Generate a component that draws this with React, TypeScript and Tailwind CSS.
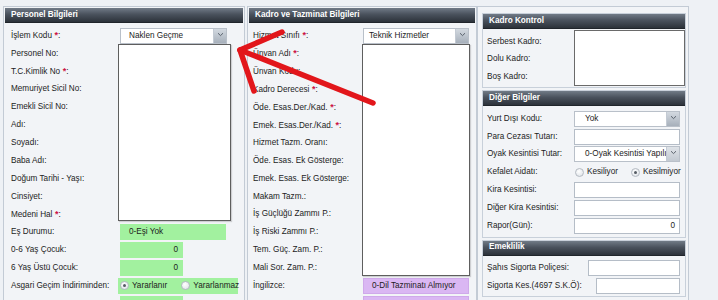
import type { ReactNode } from "react";

function Header({ title }: { title: string }) {
  return (
    <div className="h-[15px] flex items-center pl-[6px] text-white font-bold text-[8.2px] leading-none bg-[linear-gradient(to_bottom,#717b87,#4a525d_45%,#2c323a)] border-b border-[#20252b]">
      {title}
    </div>
  );
}

function Label({ text, req }: { text: string; req?: boolean }) {
  if (!text) return null;
  return (
    <span className="whitespace-nowrap">
      {text}
      {req && <span className="text-[#cc1144] font-bold text-[9px]"> *</span>}:
    </span>
  );
}

function Row({
  label,
  req,
  w,
  h = "h-[17.86px]",
  children,
}: {
  label: string;
  req?: boolean;
  w: string;
  h?: string;
  children?: ReactNode;
}) {
  return (
    <div className={`flex items-center ${h}`}>
      <div className={`${w} shrink-0`}>
        <Label text={label} req={req} />
      </div>
      {children}
    </div>
  );
}

function Arrow({ dim }: { dim?: boolean }) {
  return (
    <div
      className={`w-[13px] h-full shrink-0 border-l border-[#c3cad3] flex justify-center pt-[3px] ${
        dim
          ? "bg-[linear-gradient(to_bottom,#dfe3e8,#c2c9d1)]"
          : "bg-[linear-gradient(to_bottom,#d3d9e0,#a7b0bb)]"
      }`}
    >
      <svg width="7" height="5" viewBox="0 0 7 5">
        <path d="M1 1.2 L3.5 3.6 L6 1.2" fill="none" stroke="#5b636d" strokeWidth="1" />
      </svg>
    </div>
  );
}

function Select({ w, text, pl, dim }: { w: string; text: string; pl: string; dim?: boolean }) {
  return (
    <div className={`h-[16px] bg-white border border-[#b9c0c9] flex items-stretch ${w}`}>
      <div className={`flex-1 flex items-center overflow-hidden whitespace-nowrap ${pl}`}>{text}</div>
      <Arrow dim={dim} />
    </div>
  );
}

function Box({ w, value, cls = "bg-white border-[#b5bdc7]", right }: { w: string; value?: string; cls?: string; right?: boolean }) {
  return (
    <div
      className={`h-[16px] border flex items-center whitespace-nowrap ${cls} ${w} ${
        right ? "justify-end pr-[4px]" : "pl-[8px]"
      }`}
    >
      {value}
    </div>
  );
}

function Radio({ on }: { on?: boolean }) {
  return (
    <span className="w-[9px] h-[9px] rounded-full border border-[#b4bac2] bg-[radial-gradient(circle_at_40%_35%,#ffffff,#dadfe5)] flex items-center justify-center shrink-0">
      {on && <span className="w-[3px] h-[3px] rounded-full bg-[#555c64]" />}
    </span>
  );
}

const personel: [string, boolean?][] = [
  ["Personel No"],
  ["T.C.Kimlik No", true],
  ["Memuriyet Sicil No"],
  ["Emekli Sicil No"],
  ["Adı"],
  ["Soyadı"],
  ["Baba Adı"],
  ["Doğum Tarihi - Yaşı"],
  ["Cinsiyet"],
  ["Medeni Hal", true],
];

const kadro: [string, boolean?][] = [
  ["Ünvan Adı", true],
  ["Ünvan Kodu"],
  ["Kadro Derecesi", true],
  ["Öde. Esas.Der./Kad.", true],
  ["Emek. Esas.Der./Kad.", true],
  ["Hizmet Tazm. Oranı"],
  ["Öde. Esas. Ek Gösterge"],
  ["Emek. Esas. Ek Gösterge"],
  ["Makam Tazm."],
  ["İş Güçlüğü Zammı P."],
  ["İş Riski Zammı P."],
  ["Tem. Güç. Zam. P."],
  ["Mali Sor. Zam. P."],
];

const green = "bg-[#a2f19f] border-[#a2f19f]";
const purple = "bg-[#dab7f3] border-[#cfa9ea]";

export default function App() {
  const c1 = "w-[115px] pl-[6px]";
  const c2 = "w-[114px] pl-[4px]";
  const c3 = "w-[91px] pl-[4px]";
  return (
    <div className="relative w-[718px] h-[300px] overflow-hidden bg-[#eef1f5] text-[#1c1c1c] text-[8.2px] leading-none font-['Liberation_Sans',Arial,sans-serif]">
      <div className="flex items-start pt-[6px] pl-[3px]">
        {/* Personel Bilgileri */}
        <div className="w-[242px] h-[310px] border border-[#c3cbd5] p-[1px] bg-[#f2f4f7]">
          <Header title="Personel Bilgileri" />
          <div className="pt-[4px]">
            <Row label="İşlem Kodu" req w={c1}>
              <div className="relative">
                <Select w="w-[107px]" text="Naklen Geçme" pl="pl-[8px]" />
                <div className="absolute left-[-2px] top-[16px] w-[113px] h-[177px] bg-white border border-[#5e5e5e] shadow-[1px_1px_1px_rgba(0,0,0,0.15)]" />
              </div>
            </Row>
            {personel.map(([l, r]) => (
              <Row key={l} label={l} req={r} w={c1} />
            ))}
            <Row label="Eş Durumu" w={c1}>
              <Box w="w-[106px]" value="0-Eşi Yok" cls={green} />
            </Row>
            <Row label="0-6 Yaş Çocuk" w={c1}>
              <Box w="w-[63px]" value="0" cls={green} right />
            </Row>
            <Row label="6 Yaş Üstü Çocuk" w={c1}>
              <Box w="w-[63px]" value="0" cls={green} right />
            </Row>
            <Row label="Asgari Geçim İndiriminden" w={c1}>
              <div className="ml-[-2px] w-[120px] h-[16px] bg-[#a2f19f] flex items-center pl-[2px]">
                <Radio on />
                <span className="ml-[3px]">Yararlanır</span>
                <span className="ml-[14px]">
                  <Radio />
                </span>
                <span className="ml-[3px]">Yararlanmaz</span>
              </div>
            </Row>
            <Row label="" w={c1}>
              <Box w="w-[63px]" cls={green} right />
            </Row>
          </div>
        </div>

        {/* Kadro ve Tazminat Bilgileri */}
        <div className="ml-[2px] w-[230px] h-[310px] border border-[#c3cbd5] p-[1px] bg-[#f2f4f7]">
          <Header title="Kadro ve Tazminat Bilgileri" />
          <div className="pt-[4px]">
            <Row label="Hizmet Sınıfı" req w={c2}>
              <div className="relative">
                <Select w="w-[106px]" text="Teknik Hizmetler" pl="pl-[5px]" />
                <div className="absolute left-[-1px] top-[16px] w-[108px] h-[232px] bg-white border border-[#5e5e5e] shadow-[1px_1px_1px_rgba(0,0,0,0.15)]" />
              </div>
            </Row>
            {kadro.map(([l, r]) => (
              <Row key={l} label={l} req={r} w={c2} />
            ))}
            <Row label="İngilizce" w={c2}>
              <Box w="w-[106px]" value="0-Dil Tazminatı Almıyor" cls={purple} />
            </Row>
            <Row label="" w={c2}>
              <Box w="w-[106px]" cls={purple} />
            </Row>
          </div>
        </div>

        {/* Kadro Kontrol / Diğer / Emeklilik */}
        <div className="w-[212px] h-[310px] border border-[#c3cbd5] pl-[4px] pr-[2px] pt-[6px] bg-[#f2f4f7]">
          <div className="border border-[#c8d0da]">
            <Header title="Kadro Kontrol" />
            <div className="flex py-[1px]">
              <div className={`${c3} pt-[3px]`}>
                <div className="h-[17.5px] flex items-center">Serbest Kadro:</div>
                <div className="h-[17.5px] flex items-center">Dolu Kadro:</div>
                <div className="h-[17.5px] flex items-center">Boş Kadro:</div>
              </div>
              <div className="w-[111px] h-[56px] bg-white border border-[#6a6a6a]" />
            </div>
          </div>

          <div className="mt-[2px] border border-[#c8d0da]">
            <Header title="Diğer Bilgiler" />
            <div className="pt-[4px] pb-[2px]">
              <Row label="Yurt Dışı Kodu" w={c3} h="h-[17.8px]">
                <Select w="w-[106px]" text="Yok" pl="pl-[10px]" />
              </Row>
              <Row label="Para Cezası Tutarı" w={c3} h="h-[17.8px]">
                <Box w="w-[106px]" />
              </Row>
              <Row label="Oyak Kesintisi Tutar" w={c3} h="h-[17.8px]">
                <Select w="w-[106px]" text="0-Oyak Kesintisi Yapılır" pl="pl-[10px]" dim />
              </Row>
              <Row label="Kefalet Aidatı" w={c3} h="h-[17.8px]">
                <div className="flex items-center pl-[1px]">
                  <Radio />
                  <span className="ml-[3px]">Kesiliyor</span>
                  <span className="ml-[13px]">
                    <Radio on />
                  </span>
                  <span className="ml-[3px]">Kesilmiyor</span>
                </div>
              </Row>
              <Row label="Kira Kesintisi" w={c3} h="h-[17.8px]">
                <Box w="w-[106px]" />
              </Row>
              <Row label="Diğer Kira Kesintisi" w={c3} h="h-[17.8px]">
                <Box w="w-[106px]" />
              </Row>
              <Row label="Rapor(Gün)" w={c3} h="h-[17.8px]">
                <Box w="w-[106px]" value="0" right />
              </Row>
            </div>
          </div>

          <div className="mt-[2px] border border-[#c8d0da]">
            <Header title="Emeklilik" />
            <div className="pt-[4px] pb-[1px]">
              <Row label="Şahıs Sigorta Poliçesi" w="w-[105px] pl-[4px]" h="h-[17.8px]">
                <Box w="w-[92px]" />
              </Row>
              <Row label="Sigorta Kes.(4697 S.K.Ö)" w="w-[113px] pl-[4px]" h="h-[17.8px]">
                <Box w="w-[84px]" />
              </Row>
            </div>
          </div>
        </div>
      </div>

      {/* red annotation arrow */}
      <svg className="absolute inset-0 pointer-events-none" width="718" height="300" viewBox="0 0 718 300">
        <g stroke="#e2161b" strokeWidth="5.5" strokeLinecap="round" fill="none">
          <line x1="240" y1="50" x2="373" y2="103" />
          <line x1="240" y1="50" x2="282" y2="32" />
          <line x1="240" y1="50" x2="254" y2="91" />
        </g>
      </svg>
    </div>
  );
}
